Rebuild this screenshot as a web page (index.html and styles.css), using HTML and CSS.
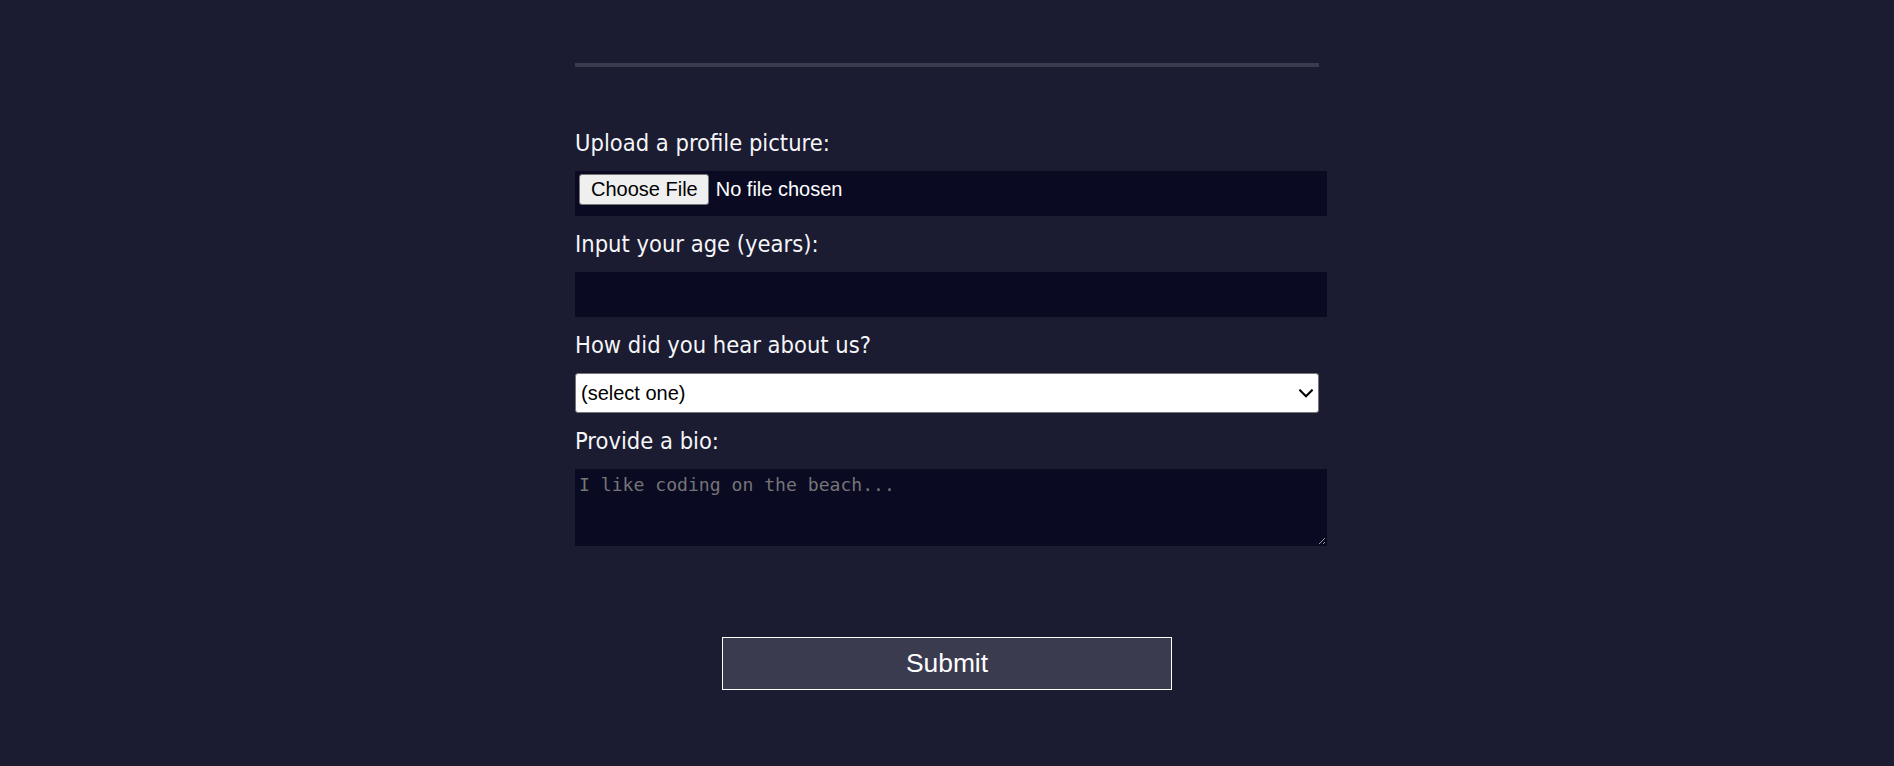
FILE: index.html
```html
<!DOCTYPE html>
<html lang="en">
<head>
<meta charset="utf-8">
<title>Registration Form</title>
<link rel="stylesheet" href="styles.css">
</head>
<body>
<main class="page">
  <form class="survey" action="#" onsubmit="return false;">
    <fieldset class="section">
      <label class="field" for="profile-picture">Upload a profile picture:
        <input class="control control-file" id="profile-picture" type="file" name="file">
      </label>
      <label class="field" for="age">Input your age (years):
        <input class="control control-text" id="age" type="number" name="age" min="13" max="120">
      </label>
      <label class="field" for="referrer">How did you hear about us?
        <span class="select-wrap">
          <select class="control control-select" id="referrer" name="referrer">
            <option value="">(select one)</option>
            <option value="1">freeCodeCamp News</option>
            <option value="2">freeCodeCamp YouTube Channel</option>
            <option value="3">freeCodeCamp Forum</option>
            <option value="4">Other</option>
          </select>
          <svg class="select-arrow" width="14" height="9" viewBox="0 0 14 9" aria-hidden="true">
            <path d="M1.2 1.4 L7 7.2 L12.8 1.4" fill="none" stroke="#000000" stroke-width="2.1" stroke-linecap="square"/>
          </svg>
        </span>
      </label>
      <label class="field" for="bio">Provide a bio:
        <textarea class="control control-area" id="bio" name="bio" rows="3" cols="30" placeholder="I like coding on the beach..."></textarea>
      </label>
    </fieldset>
    <input class="submit" type="submit" value="Submit">
  </form>
</main>
</body>
</html>
```
FILE: styles.css
```css
* {
  box-sizing: border-box;
}

body {
  margin: 0;
  background-color: #1b1b32;
  color: #f5f6f7;
  font-family: "DejaVu Sans Condensed", "DejaVu Sans", sans-serif;
  font-size: 23.5px;
}

.page {
  min-height: 766px;
}

.survey {
  width: 744px;
  margin: 0 auto;
  padding-top: 63px;
}

.section {
  margin: 0;
  border: none;
  border-top: 4px solid #3b3b4f;
  padding: 48px 0 53px;
  min-width: 0;
}

.field {
  display: block;
  margin: 12px 0;
  line-height: 32px;
}

.control {
  display: block;
  margin: 12px 0 0 0;
  font-family: "Liberation Sans", Arial, sans-serif;
  font-size: 20px;
}

.control-file,
.control-text,
.control-area {
  width: calc(100% + 8px);
  background-color: #0a0a23;
  border: 1px solid #0a0a23;
  color: #ffffff;
}

.control-file {
  height: 45px;
  padding: 2px 3px;
  line-height: 23px;
}

.control-file::file-selector-button {
  font-family: "Liberation Sans", Arial, sans-serif;
  font-size: 20px;
  line-height: 23px;
  padding: 3px 10px 3px 11px;
  margin: 0 7px 0 0;
  border: 1px solid #767676;
  border-radius: 3px;
  background-color: #efefef;
  color: #000000;
}

.control-text {
  height: 45px;
  padding: 1px 3px;
}

.select-wrap {
  display: block;
  position: relative;
}

.control-select {
  width: 100%;
  height: 40px;
  padding: 0 30px 0 5px;
  background-color: #ffffff;
  color: #000000;
  border: 1px solid #767676;
  border-radius: 3px;
  appearance: none;
  -webkit-appearance: none;
}

.select-arrow {
  position: absolute;
  right: 6px;
  top: 16px;
  pointer-events: none;
}

.control-area {
  height: 77px;
  padding: 3px 3px;
  font-family: "DejaVu Sans Mono", "Liberation Mono", monospace;
  font-size: 18.1px;
  line-height: 23px;
}

.control-area::placeholder {
  color: #757575;
}

.submit {
  display: block;
  width: 450px;
  height: 53px;
  margin: 26px auto 0;
  background-color: #3b3b4f;
  border: 1px solid #ffffff;
  color: #ffffff;
  font-family: "Liberation Sans", Arial, sans-serif;
  font-size: 26.4px;
}
```
